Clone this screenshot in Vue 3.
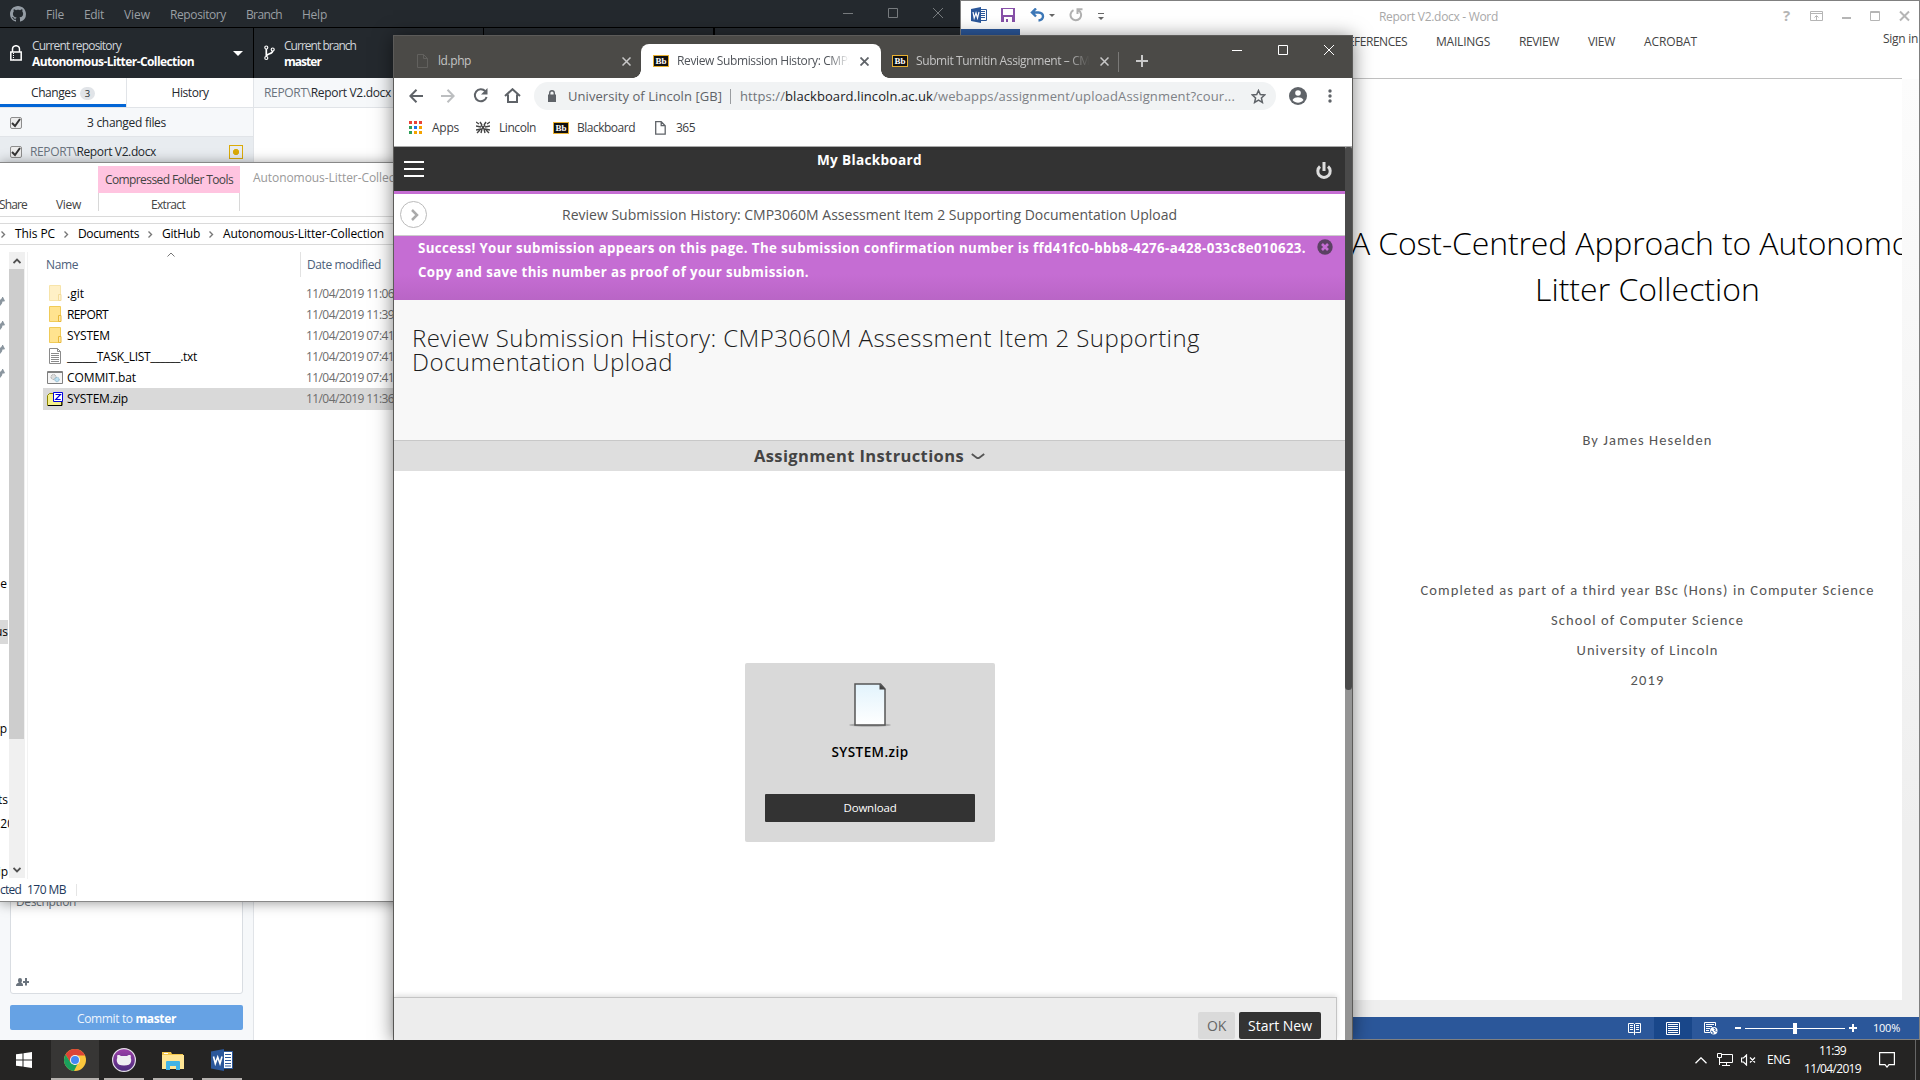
<script setup>
// Sets an element's width and spreads its letters to fill it.
const vFit = {
  mounted(el, { value }) {
    const range = document.createRange()
    range.selectNodeContents(el)
    const natural = range.getBoundingClientRect().width
    el.style.width = value + 'px'
    el.style.letterSpacing = (value - natural) / el.textContent.length + 'px'
  },
}

const menu = [['File', 18], ['Edit', 20], ['View', 26], ['Repository', 56], ['Branch', 36], ['Help', 25]]
const files = [
  { name: '.git', w: 17, time: '11:06', kind: 'folder pale' },
  { name: 'REPORT', w: 41, time: '11:39', kind: 'folder' },
  { name: 'SYSTEM', w: 43, time: '07:41', kind: 'folder' },
  { name: '______TASK_LIST______.txt', w: 130, time: '07:41', kind: 'txt' },
  { name: 'COMMIT.bat', w: 69, time: '07:41', kind: 'bat' },
  { name: 'SYSTEM.zip', w: 61, time: '11:36', kind: 'zip' },
]
const crumbs = [['This PC', 40], ['Documents', 61], ['GitHub', 38], ['Autonomous-Litter-Collection', 161]]
const ribbon = [['MAILINGS', 54], ['REVIEW', 40], ['VIEW', 27], ['ACROBAT', 53]]
const appColors = ['#ea4335', '#ea4335', '#ea4335', '#2ea05a', '#1a73e8', '#f5a300', '#2ea05a', '#f5a300', '#f5a300']
const octocat = 'M8 0C3.58 0 0 3.58 0 8c0 3.54 2.29 6.53 5.47 7.59.4.07.55-.17.55-.38 0-.19-.01-.82-.01-1.49-2.01.37-2.53-.49-2.69-.94-.09-.23-.48-.94-.82-1.13-.28-.15-.68-.52-.01-.53.63-.01 1.08.58 1.23.82.72 1.21 1.87.87 2.33.66.07-.52.28-.87.51-1.07-1.78-.2-3.64-.89-3.64-3.95 0-.87.31-1.59.82-2.15-.08-.2-.36-1.02.08-2.12 0 0 .67-.21 2.2.82.64-.18 1.32-.27 2-.27s1.36.09 2 .27c1.53-1.04 2.2-.82 2.2-.82.44 1.1.16 1.92.08 2.12.51.56.82 1.27.82 2.15 0 3.07-1.87 3.75-3.65 3.95.29.25.54.73.54 1.48 0 1.07-.01 1.93-.01 2.2 0 .21.15.46.55.38A8.01 8.01 0 0 0 16 8c0-4.42-3.58-8-8-8z'
</script>

<template>
  <div class="desktop">
    <!-- GitHub Desktop -->
    <section class="win github">
      <div class="gh-title">
        <svg class="octo" viewBox="0 0 16 16" width="16" height="16"><path fill="#959da5" :d="octocat" /></svg>
        <nav class="gh-menu"><span v-for="m in menu" :key="m[0]" v-fit="m[1]">{{ m[0] }}</span></nav>
        <svg class="gh-ctl" width="100" height="12" fill="none" stroke="#777b7e"><path d="M0 6.500h10M45.500 1.500h9v9h-9zM90 1l10 10M100 1l-10 10" /></svg>
      </div>
      <div class="gh-bar">
        <div class="gh-repo">
          <svg width="12" height="16" viewBox="0 0 12 16" fill="none" stroke="#fff" stroke-width="1.500"><path d="M2.500 7V4a3.500 3.300 0 0 1 7 0v3M.8 7h10.400v8H.8z" /><path stroke-width="1" d="M3.500 8v7" stroke-dasharray="1 1" /></svg>
          <div class="two"><span v-fit="89">Current repository</span><b v-fit="162">Autonomous-Litter-Collection</b></div>
          <i class="down"></i>
        </div>
        <div class="gh-branch">
          <svg width="11" height="16" viewBox="0 0 11 16" fill="none" stroke="#fff" stroke-width="1.200"><circle cx="2.300" cy="2.500" r="1.500" /><circle cx="2.300" cy="13" r="1.500" /><circle cx="8.700" cy="4.500" r="1.500" /><path stroke-width="1.700" d="M2.300 4v7.500M8.700 6c0 3.500-6.400 2-6.400 5.500" /></svg>
          <div class="two"><span v-fit="72">Current branch</span><b v-fit="37">master</b></div>
        </div>
        <div class="gh-push"></div>
        <div class="gh-rest"></div>
      </div>
      <div class="gh-main">
        <aside class="gh-side">
          <div class="gh-tabs">
            <div class="tab on"><span v-fit="45">Changes</span><em>3</em></div>
            <div class="tab"><span v-fit="37">History</span></div>
          </div>
          <div class="gh-row head"><i class="check"><svg width="12" height="12"><path d="M2 6l3 3 5-7" /></svg></i><span class="changed" v-fit="79">3 changed files</span></div>
          <div class="gh-row sel"><i class="check"><svg width="12" height="12"><path d="M2 6l3 3 5-7" /></svg></i><span class="path" v-fit="126"><u>REPORT\</u>Report V2.docx</span><i class="mod"></i></div>
          <div class="gh-space"></div>
          <div class="desc"><span v-fit="60">Description</span>
            <svg width="13" height="9" fill="#6a737d"><path d="M2 2a2 2 0 0 1 4 0c0 1.500-.4 2-.8 2.500C7 5.500 7 6 7 8H0C0 6 .5 5.500 2.800 4.500 2.300 4 2 3.500 2 2zM9 0h2v3h2v2h-2v2.500H9V5H7V3h2z" /></svg>
          </div>
          <div class="commit"><span v-fit="99">Commit to <b>master</b></span></div>
        </aside>
        <div class="gh-diff"><div class="gh-file"><span v-fit="127"><u>REPORT\</u>Report V2.docx</span></div></div>
      </div>
    </section>

    <!-- Word -->
    <section class="win word">
      <div class="w-title">
        <svg class="w-logo" width="16" height="16"><path fill="#fff" stroke="#2b579a" d="M8.500 2.500h7v11h-7z" /><path stroke="#2b579a" d="M10 4.500h4M10 6.500h4M10 8.500h4M10 10.500h4" /><path fill="#2b579a" d="M0 2l10-2v16L0 14z" /><path fill="none" stroke="#fff" stroke-width="1.200" d="M2 5l1.200 6L5 6l1.500 5L8 5" /></svg>
        <svg class="save" width="14" height="14"><path fill="#8750a8" d="M0 0h14v14H0z" /><path fill="#fff" d="M2 1h10v6H2zM3 9h8v5H7v-3H5v3H3z" /></svg>
        <svg class="undo" width="15" height="14" fill="none" stroke="#3d78b8" stroke-width="2.400"><path d="M2 4.500h6.500c6 0 6 7.500 0 8M6 .5L2 4.500l4 4" /></svg>
        <i class="tri"></i>
        <svg class="redo" width="14" height="14" fill="none" stroke="#b1b1b1" stroke-width="2"><path d="M4.500 2.200a5.300 5.300 0 1 0 5 .2M8.500 6V1.200h5" /></svg>
        <div class="more"><i class="tri"></i></div>
        <span class="w-name" v-fit="119">Report V2.docx - Word</span>
        <b class="w-help">?</b>
        <svg class="w-ctl" width="100" height="12" fill="none" stroke="#b5b5b5"><path d="M.5 1.500h12v9H.5zM.5 3.500h12M6.500 10V6M4.500 7.500l2-2 2 2" /><path stroke-width="2" d="M32 8h9" /><path d="M60.500 1.500h9v9h-9zM60.500 2.500h9" /><path stroke-width="2" d="M90 1.500l9 9M99 1.500l-9 9" /></svg>
      </div>
      <div class="w-ribbon">
        <i class="w-file"></i>
        <span class="w-ref" v-fit="66">REFERENCES</span>
        <span v-for="r in ribbon" :key="r[0]" v-fit="r[1]">{{ r[0] }}</span>
        <span class="w-sign" v-fit="35">Sign in</span>
      </div>
      <div class="w-body">
        <article class="page">
          <h1><span v-fit="593">A Cost-Centred Approach to Autonomous</span></h1>
          <h1><span v-fit="225">Litter Collection</span></h1>
          <p class="by"><span v-fit="130">By James Heselden</span></p>
          <p><span v-fit="454">Completed as part of a third year BSc (Hons) in Computer Science</span></p>
          <p><span v-fit="193">School of Computer Science</span></p>
          <p><span v-fit="142">University of Lincoln</span></p>
          <p><span v-fit="34">2019</span></p>
        </article>
      </div>
      <div class="w-status">
        <svg class="book" width="13" height="13" fill="none" stroke="#fff"><path d="M.5 1.500h5l1 1 1-1h5v9h-5l-1 1-1-1h-5zM6.500 2v11M2 3.500h3M2 5.500h3M2 7.500h3M8 3.500h3M8 5.500h3M8 7.500h3" /></svg>
        <div class="print"><svg width="14" height="13" fill="none" stroke="#fff"><path d="M.5.5h13v12H.5zM2 2.500h10M2 4.500h10M2 6.500h10M2 8.500h10M2 10.500h10" /></svg></div>
        <svg class="web" width="14" height="13" fill="none" stroke="#fff"><path d="M6 10.500H.5V.5h11V4M2 2.500h8M2 4.500h6M2 6.500h4M2 8.500h3" /><circle cx="9.800" cy="8.800" r="3.700" fill="#fff" stroke="none" /><path stroke="#2b579a" d="M7 9l2 1v2M9.500 6l2 1-1 1.500 2 1" /></svg>
        <i class="minus"></i><div class="slider"><i></i></div>
        <svg class="plus" width="8" height="8" stroke="#fff" stroke-width="2"><path d="M0 4h8M4 0v8" /></svg>
        <span v-fit="27">100%</span>
      </div>
    </section>

    <!-- File Explorer -->
    <section class="win explorer">
      <div class="e-top">
        <div class="e-left"><span class="share" v-fit="28">Share</span><span v-fit="25">View</span></div>
        <div class="e-tools"><div class="pink"><span v-fit="128">Compressed Folder Tools</span></div><div class="extract"><span v-fit="34">Extract</span></div></div>
        <span class="e-name" v-fit="163">Autonomous-Litter-Collection</span>
      </div>
      <div class="e-crumbs">
        <template v-for="c in crumbs" :key="c[0]"><svg width="5" height="7" fill="none" stroke="#777" stroke-width="1.400"><path d="M.5.5l3 3-3 3" /></svg><span v-fit="c[1]">{{ c[0] }}</span></template>
      </div>
      <div class="e-main">
        <div class="nav">
          <svg v-for="n in 4" :key="n" width="5" height="9" fill="#8b969f"><path d="M0 3l2-2V0h1l2 4-1 .5-1.500 0-.5 2L0 9z" /></svg>
          <span class="n1">e</span><span class="n2">us</span><span class="n3">p</span><span class="n4">ts</span><span class="n5">20</span><span class="n6">ip</span>
        </div>
        <div class="scroll">
          <div class="btn"><svg width="8" height="6" fill="none" stroke="#505050" stroke-width="1.800"><path d="M.5 5L4 1.500 7.500 5" /></svg></div>
          <div class="thumb"></div>
          <div class="btn low"><svg width="8" height="6" fill="none" stroke="#505050" stroke-width="1.800"><path d="M.5 1L4 4.500 7.500 1" /></svg></div>
        </div>
        <div class="list">
          <div class="l-head"><span v-fit="32">Name</span><svg width="8" height="5" fill="none" stroke="#777"><path d="M.5 4.500L4 1l3.500 3.500" /></svg><i></i><span v-fit="74">Date modified</span></div>
          <div v-for="f in files" :key="f.name" class="l-row" :class="{ picked: f.kind === 'zip' }">
            <div class="ico">
              <svg v-if="f.kind.startsWith('folder')" :class="f.kind" width="14" height="17"><path fill="#ffe38f" stroke="#f0cb58" d="M1.500.5h11v15h-11z" /><path fill="#ffe9a6" stroke="#e8b83a" d="M10.500 9.500h2.500v6h-2.500z" /></svg>
              <svg v-else-if="f.kind === 'txt'" width="14" height="17" fill="#fff" stroke="#8a8a8a"><path d="M1.500.5h8l3 3v12h-11zM9.500.5v3h3M3 5.500h8M3 7.500h8M3 9.500h8M3 11.500h8M3 13.500h8" /></svg>
              <svg v-else-if="f.kind === 'bat'" class="wide" width="16" height="14"><path fill="#f6f6f6" stroke="#808080" d="M.5.5h15v12H.5zM.5 1.500h15" /><circle cx="6.500" cy="6" r="2.500" fill="#ddd" stroke="#999" stroke-dasharray="1 .7" /><circle cx="10" cy="8.500" r="2.200" fill="#bcdff0" stroke="#7cacc4" stroke-dasharray="1 .7" /></svg>
              <svg v-else class="wide" width="16" height="15"><path fill="#f5f08a" stroke="#8b8200" d="M.5 3.500l2-2h4v1h8v11H.5z" /><path stroke="#000" d="M1 13.500h14V9" fill="none" /><path fill="#fff" stroke="#00d" d="M6.500.5h9v9h-9z" /><path fill="none" stroke="#00d" stroke-width="1.100" d="M8.500 2.500h5L8.700 7.500h5" /></svg>
            </div>
            <span class="fname" v-fit="f.w">{{ f.name }}</span>
            <span class="date" v-fit="88">11/04/2019 {{ f.time }}</span>
          </div>
        </div>
      </div>
      <div class="e-status"><span v-fit="21">cted</span><span v-fit="39">170 MB</span><i></i></div>
    </section>

    <!-- Chrome -->
    <section class="win chrome">
      <div class="c-tabs">
        <div class="c-tab first">
          <svg width="11" height="14" fill="none" stroke="#62615e"><path d="M.5.5h6l4 4v9H.5zM6.500.5v4h4" /></svg>
          <span class="ct"><span v-fit="33">ld.php</span></span>
          <svg class="x" width="9" height="9" stroke="#c8c8c8" stroke-width="1.500"><path d="M.5.5l8 8M8.500.5l-8 8" /></svg>
        </div>
        <div class="c-tab active">
          <i class="bb">Bb</i><span class="ct"><span v-fit="207">Review Submission History: CMP3060M</span></span>
          <svg class="x" width="9" height="9" stroke="#5f6368" stroke-width="1.800"><path d="M.5.5l8 8M8.500.5l-8 8" /></svg>
        </div>
        <div class="c-tab last">
          <i class="bb">Bb</i><span class="ct"><span v-fit="200">Submit Turnitin Assignment – CMP306</span></span>
          <svg class="x" width="9" height="9" stroke="#c8c8c8" stroke-width="1.500"><path d="M.5.5l8 8M8.500.5l-8 8" /></svg>
        </div>
        <svg class="new" width="12" height="12" stroke="#c9c9c9" stroke-width="2"><path d="M0 6h12M6 0v12" /></svg>
        <svg class="c-ctl" width="104" height="12" fill="none" stroke="#fff"><path d="M0 6.500h10M46.500 1.500h9v9h-9zM92 1l10 10M102 1l-10 10" /></svg>
      </div>
      <div class="c-bar">
        <svg width="14" height="14" fill="none" stroke="#5f6368" stroke-width="2"><path d="M14 7H1.500M7.500.8L1.300 7l6.200 6.200" /></svg>
        <svg width="14" height="14" fill="none" stroke="#bcbec0" stroke-width="2"><path d="M0 7h12.500M6.500.8L12.700 7l-6.200 6.200" /></svg>
        <svg class="reload" width="15" height="15" fill="none" stroke="#5f6368" stroke-width="2"><path d="M12.300 3.200a6 6 0 1 0 1.300 5.800" /><path fill="#5f6368" stroke="none" d="M14.500 0v6.500H8z" /></svg>
        <svg class="home" width="17" height="15" fill="none" stroke="#5f6368" stroke-width="2"><path d="M1 8l7.500-6.800L16 8M4 6.500V14h9V6.500" /></svg>
        <div class="omni">
          <svg width="8" height="12" fill="#5f6368"><path d="M0 4.500h8V12H0z" /><path fill="none" stroke="#5f6368" stroke-width="1.400" d="M1.700 5V3a2.300 2.300 0 0 1 4.600 0v2" /></svg>
          <span class="org" v-fit="154">University of Lincoln [GB]</span><i></i>
          <span v-fit="45">https://</span><span class="host" v-fit="148">blackboard.lincoln.ac.uk</span><span class="rest" v-fit="302">/webapps/assignment/uploadAssignment?cour...</span>
          <svg class="star" width="15" height="15" fill="none" stroke="#5f6368" stroke-width="1.500"><path d="M7.500 1.500l1.800 4.100 4.400.4-3.300 3 1 4.400-3.900-2.300-3.900 2.300 1-4.400-3.300-3 4.400-.4z" /></svg>
        </div>
        <svg class="me" width="18" height="18"><circle cx="9" cy="9" r="9" fill="#5f6368" /><circle cx="9" cy="6" r="2.800" fill="#fff" /><path fill="#fff" d="M3.500 13c1-2 3.500-2.700 5.500-2.700s4.500.7 5.500 2.700c-3 3.500-8 3.500-11 0z" /></svg>
        <svg class="dots" width="4" height="14" fill="#5f6368"><circle cx="2" cy="2" r="1.700" /><circle cx="2" cy="7" r="1.700" /><circle cx="2" cy="12" r="1.700" /></svg>
      </div>
      <div class="c-marks">
        <div class="apps"><i v-for="(c, i) in appColors" :key="i" :style="{ background: c }"></i></div><span v-fit="27">Apps</span>
        <svg class="lin" width="14" height="13" stroke="#444" stroke-width="1.400" fill="none"><path d="M0 1l3 2M14 1l-3 2M4 1l2 3M10 1L8 4M0 5l5 1M14 5l-5 1M0 9l5-1M14 9L9 8M1 12l3-3M13 12l-3-3M5 12l1-4M9 12L8 8M5 4l4 5M9 4L5 9" /></svg><span v-fit="37">Lincoln</span>
        <i class="bb">Bb</i><span v-fit="58">Blackboard</span>
        <svg class="pg" width="11" height="14" fill="none" stroke="#5f6368" stroke-width="1.300"><path d="M.7.7h5.500l4 4v8.500H.7zM6.200.7v4h4" /></svg><span v-fit="19">365</span>
      </div>
      <div class="view">
        <div class="content">
          <header class="b-head">
            <div class="burger"><i></i><i></i><i></i></div>
            <b v-fit="105">My Blackboard</b>
            <svg class="power" width="18" height="18" fill="none" stroke="#ddd" stroke-width="3"><path d="M5 4.500a6.200 6.200 0 1 0 8 0M9 0v9" /></svg>
          </header>
          <div class="b-crumb">
            <i class="circle"><svg width="8" height="12" fill="none" stroke="#aaa" stroke-width="2.500"><path d="M1 1l5 5-5 5" /></svg></i>
            <span v-fit="615">Review Submission History: CMP3060M Assessment Item 2 Supporting Documentation Upload</span>
          </div>
          <div class="success">
            <div><b v-fit="888">Success! Your submission appears on this page. The submission confirmation number is ffd41fc0-bbb8-4276-a428-033c8e010623.</b><b v-fit="391">Copy and save this number as proof of your submission.</b></div>
            <svg width="16" height="16"><circle cx="8" cy="8" r="7.700" fill="#5b4163" /><path stroke="#c56dd3" stroke-width="2.600" d="M5 5l6 6M11 5l-6 6" /></svg>
          </div>
          <div class="b-title"><span v-fit="788">Review Submission History: CMP3060M Assessment Item 2 Supporting</span><span v-fit="261">Documentation Upload</span></div>
          <div class="instr"><b v-fit="210">Assignment Instructions</b><svg width="14" height="7" fill="none" stroke="#555" stroke-width="1.900"><path d="M.8 1L6 4.900q1 .5 2 0L13.200 1" /></svg></div>
          <div class="stage">
            <div class="card">
              <svg width="44" height="46"><defs><linearGradient id="sheet" x2="0" y2="1"><stop stop-color="#e2f3fc" /><stop offset="1" stop-color="#fff" /></linearGradient></defs><ellipse cx="22" cy="43" rx="21" ry="1.800" fill="#aaa" /><path fill="url(#sheet)" stroke="#555" stroke-width="1.500" d="M7 2h25.500L37 7v36H7z" /><path fill="#444" d="M31.500 2l6 5.500h-6z" /></svg>
              <b v-fit="77">SYSTEM.zip</b>
              <div class="dl"><span v-fit="53">Download</span></div>
            </div>
          </div>
          <footer><div class="ok"><span v-fit="19">OK</span></div><div class="start"><span v-fit="64">Start New</span></div></footer>
        </div>
        <div class="c-scroll"><i></i></div>
      </div>
    </section>

    <!-- Taskbar -->
    <section class="win task">
      <div class="k win-k"><svg width="16" height="16" fill="#fff"><path d="M0 2.300l6.500-.9v6.100H0zM7.500 1.200L16 0v7.500H7.500zM0 8.500h6.500v6.100L0 13.700zM7.500 8.500H16V16l-8.500-1.200z" /></svg></div>
      <div class="k hot"><svg width="22" height="22" viewBox="0 0 22 22"><circle cx="11" cy="11" r="11" fill="#fbc63c" /><path fill="#dc4437" d="M1.500 5.500a11 11 0 0 1 19 0L20.900 6.500H11L6 13z" /><path fill="#1a9f5c" d="M1.500 5.500L6.500 13.500 11 16l2.500-1L10 22A11 11 0 0 1 1.500 5.500z" /><circle cx="11" cy="11" r="5" fill="#f4f4f4" /><circle cx="11" cy="11" r="4" fill="#4587f3" /></svg></div>
      <div class="k"><svg width="24" height="24"><defs><linearGradient id="plum" x2="0" y2="1"><stop stop-color="#9c3fa8" /><stop offset="1" stop-color="#4a2c7c" /></linearGradient></defs><circle cx="12" cy="12" r="11.400" fill="url(#plum)" stroke="#e4dfe8" stroke-width="1.200" /><path fill="#efeff2" d="M5.500 7c1.500-.3 3 .5 3.500 1h6c.5-.5 2-1.300 3.500-1 .5 1 .4 2 .2 3 .6 1 .6 2 .4 3.500-.7 3-3 4-7.100 4s-6.400-1-7.100-4c-.2-1.500-.2-2.500.4-3.500-.2-1-.3-2 .2-3z" /></svg></div>
      <div class="k"><svg width="22" height="19"><path fill="#f3c64a" d="M0 1h9l1 2h11v3H0z" /><path fill="#ffe594" d="M0 4h22v14H0z" /><path fill="#41b4e6" d="M4 19v-8q0-1 1-1h12q1 0 1 1v8h-4v-4H8v4z" /><path stroke="#fff" d="M2 2.500h4" /></svg></div>
      <div class="k"><svg width="22" height="22"><path fill="#fff" stroke="#2b579a" d="M12 2.500h9.500v17H12z" /><path stroke="#2b579a" stroke-width="1.200" d="M14 5.500h6M14 8.500h6M14 11.500h6M14 14.500h6M14 17h6" /><path fill="#2b579a" d="M0 2.500L13 0v22L0 19.500z" /><path fill="none" stroke="#fff" stroke-width="1.600" d="M2.500 7.500L4.300 14.500 6.700 8 9 14.500 11 7.500" /></svg></div>
      <div class="tray">
        <svg class="up" width="12" height="7" fill="none" stroke="#fff" stroke-width="1.300"><path d="M.5 6.300L6 .8l5.500 5.500" /></svg>
        <svg class="net" width="16" height="14" fill="none" stroke="#fff"><path d="M5 1.500h10.500v8H3M2.500 5v7M.5.500h4v4h-4zM9.500 10v3M5 12.500h8" /></svg>
        <svg class="snd" width="15" height="12" fill="none" stroke="#fff" stroke-width="1.200"><path d="M.5 4h2l3-3v10l-3-3h-2zM9 3.500l5 5M14 3.500l-5 5" /></svg>
        <span class="eng" v-fit="23">ENG</span>
        <div class="clock"><span v-fit="27">11:39</span><span v-fit="57">11/04/2019</span></div>
        <svg class="note" width="16" height="16" fill="none" stroke="#fff" stroke-width="1.200"><path d="M.6.6h14.800v12H10l-2 2.500-2-2.500H.6z" /></svg>
        <i class="peek"></i>
      </div>
    </section>
  </div>
</template>

<style>
body { margin: 0; overflow: hidden; }
</style>

<style scoped>
.desktop { position: relative; width: 1920px; height: 1080px; overflow: hidden; background: #fff; font: 12px/16px "Open Sans", "Noto Sans", sans-serif; color: #24292e; }
.desktop * { box-sizing: border-box; }
.win { position: absolute; overflow: hidden; display: flex; flex-direction: column; }
.win span, .win b { white-space: nowrap; flex: none; display: block; }
.win b b { display: inline; }
svg { flex: none; display: block; }
u { text-decoration: none; color: #6a737d; }
i, em { font-style: normal; display: block; flex: none; }

.github { left: 0; top: 0; width: 960px; height: 1040px; background: #fff; }
.gh-title { height: 28px; background: #24292e; border-bottom: 1px solid #000; display: flex; align-items: center; padding: 1px 6px 0 10px; color: #9a9fa4; flex: none; }
.gh-menu { display: flex; gap: 20px; margin: 1px auto 0 20px; }
.gh-ctl { margin: -3px 11px 0 0; }
.gh-bar { height: 50px; background: #24292e; display: flex; flex: none; color: #d1d5da; }
.gh-bar > div { border-right: 1px solid #000; display: flex; align-items: center; }
.gh-repo { width: 254px; padding-left: 10px; }
.gh-branch { width: 230px; padding-left: 10px; }
.gh-push { width: 230px; }
.two { margin-left: 10px; width: 201px; margin-top: 2px; }
.gh-branch .two { margin-left: 9px; }
.two b { color: #fff; }
.down { border: 5px solid transparent; border-top-color: #fff; border-bottom: 0; }
.gh-main { display: flex; flex: 1; }
.gh-side { width: 254px; border-right: 1px solid #e1e4e8; background: #f6f8fa; display: flex; flex-direction: column; }
.gh-tabs { display: flex; height: 30px; background: #fff; border-bottom: 1px solid #e1e4e8; flex: none; }
.tab { flex: 1; display: flex; align-items: center; justify-content: center; padding-top: 1px; }
.tab.on { border-right: 1px solid #e1e4e8; box-shadow: inset 0 -3px #0366d6; gap: 4px; }
.tab em { font-size: 9.500px; line-height: 13px; width: 15px; height: 13px; text-align: center; background: #e1e4e8; border-radius: 7px; }
.gh-row { height: 29px; border-bottom: 1px solid #e1e4e8; display: flex; align-items: center; padding: 1px 10px 0; flex: none; }
.gh-row.sel { background: #e8ecf0; height: 30px; }
.check { width: 12px; height: 12px; border: 1px solid #8d8d8d; border-radius: 2px; background: #ececec; }
.check svg { margin: -1px; fill: none; stroke: #333; stroke-width: 2; }
.changed { margin-left: 65px; }
.path { margin-left: 8px; }
.mod { width: 14px; height: 14px; margin-left: 73px; border: 1px solid #dbab09; background: radial-gradient(circle, #dbab09 2.800px, transparent 3.300px); }
.gh-space { flex: 1; }
.desc { height: 110px; margin: 0 10px; border: 1px solid #d9dde2; border-radius: 3px; background: #fff; padding: 9px 5px 6px; color: #6a737d; display: flex; flex-direction: column; justify-content: space-between; }
.commit { height: 25px; margin: 11px 10px 10px; background: #66a2e4; border-radius: 2px; color: #eef5fd; display: flex; align-items: center; justify-content: center; flex: none; padding-top: 2px; }
.commit b { display: inline; color: #fff; }
.gh-diff { flex: 1; }
.gh-file { height: 30px; background: #f6f8fa; border-bottom: 1px solid #e1e4e8; display: flex; align-items: center; padding: 1px 0 0 10px; }

.word { left: 960px; top: 0; width: 960px; height: 1040px; background: #fff; border: 1px solid #808080; color: #444; }
.w-title { height: 28px; display: flex; align-items: center; flex: none; padding-left: 10px; }
.save { margin-left: 14px; }
.undo { margin-left: 15px; }
.tri { border: 3px solid transparent; border-top-color: #666; border-bottom: 0; margin-left: 4px; }
.redo { margin-left: 14px; }
.more { margin-left: 15px; border-top: 1px solid #666; padding-top: 3px; width: 6px; margin-top: 3px; }
.more .tri { margin: 0; }
.w-name { margin-left: 275px; color: #a8a8a8; margin-top: 3px; }
.w-help { margin-left: 285px; width: 10px; font-size: 15px; color: #b5b5b5; }
.w-ctl { margin-left: 17px; margin-top: 1px; }
.w-ribbon { height: 50px; flex: none; display: flex; padding-top: 5px; border-bottom: 1px solid #c0c0c0; width: 941px; font-size: 12px; }
.w-file { width: 59px; height: 10px; background: #2b579a; margin: -5px 0 0; }
.w-ribbon span { margin-left: 29px; }
.w-ribbon .w-ref { margin-left: 321px; }
.w-ribbon .w-sign { margin: -3px 0 0 186px; }
.w-body { flex: 1; background: linear-gradient(#fcfcfc, #efefef 80%); padding-bottom: 17px; display: flex; }
.page { width: 941px; background: #fff; padding: 141px 0 0 432px; overflow: hidden; display: flex; flex-direction: column; align-items: center; }
.page h1, .page p { margin: 0; display: flex; justify-content: center; width: 516px; flex: none; }
.page h1 { font-size: 32px; font-weight: 300; line-height: 46px; color: #000; }
.page p { font-family: Carlito, Lato, sans-serif; font-size: 14.500px; line-height: 30px; color: #555; }
.page .by { margin: 113px 0 120px; }
.w-status { height: 22px; flex: none; background: #2b579a; display: flex; align-items: center; color: #fff; font-size: 11px; }
.book { margin-left: 667px; }
.print { width: 38px; height: 22px; background: #19478a; margin-left: 13px; display: flex; align-items: center; justify-content: center; }
.web { margin-left: 12px; }
.minus { width: 6px; height: 2px; background: #fff; margin-left: 17px; }
.slider { width: 100px; height: 11px; margin: 0 4px; background: linear-gradient(#fff, #fff) 0 5px / 100% 1px no-repeat; display: flex; justify-content: center; }
.slider i { width: 4px; background: #fff; }
.w-status span { margin-left: 16px; }

.explorer { left: 0; top: 162px; width: 700px; height: 740px; background: #fff; border-top: 1px solid #888; border-bottom: 1px solid #888; box-shadow: 0 1px 12px rgba(0,0,0,.4); color: #000; }
.e-top { height: 54px; border-bottom: 1px solid #dadada; display: flex; flex: none; color: #444; }
.e-left { display: flex; padding-top: 34px; width: 98px; }
.e-left .share { margin: 0 29px 0 -1px; }
.e-tools { width: 142px; padding-top: 3px; }
.pink { height: 27px; background: #ffc4e0; display: flex; justify-content: center; align-items: center; padding-top: 1px; }
.extract { height: 18px; border: 1px solid #d8d8d8; border-width: 0 1px; display: flex; justify-content: center; padding: 4px 2px 0 0; }
.e-name { color: #999; margin: 7px 0 0 13px; }
.e-crumbs { margin-top: 6px; height: 22px; border: 1px solid #dadada; border-width: 1px 0; display: flex; align-items: center; flex: none; }
.e-crumbs svg { margin: 1px 9px 0 9px; }
.e-crumbs svg:first-child { margin-left: 1px; }
.e-main { flex: 1; display: flex; padding-top: 7px; }
.nav { width: 9px; overflow: hidden; position: relative; padding-top: 45px; }
.nav svg { margin-bottom: 15px; }
.nav span { position: absolute; right: 1px; line-height: 24px; }
.nav .n1 { top: 320px; right: 2px; } .nav .n2 { top: 368px; background: #d9d9d9; } .nav .n3 { top: 465px; right: 2px; } .nav .n4 { top: 536px; } .nav .n5 { top: 560px; right: -5px; } .nav .n6 { top: 608px; }
.scroll { width: 16px; background: #f0f0f0; height: 626px; display: flex; flex-direction: column; }
.scroll .btn { height: 17px; display: flex; align-items: center; justify-content: center; }
.scroll .low { margin-top: auto; }
.thumb { height: 470px; width: 15px; background: #cdcdcd; }
.list { flex: 1; margin-left: 2px; border-left: 1px solid #f2f2f2; }
.l-head { display: flex; padding-left: 18px; height: 31px; color: #4c607a; }
.l-head span { margin-top: 5px; }
.l-head svg { margin: 0 125px 0 89px; }
.l-head i { width: 1px; height: 25px; background: #e2e2e2; }
.l-head i + span { margin-left: 6px; }
.l-row { height: 21px; display: flex; align-items: center; margin-left: 15px; padding-left: 5px; }
.l-row.picked { background: #d9d9d9; height: 22px; }
.ico { width: 19px; display: flex; }
.ico .wide { margin-left: -1px; }
.ico .pale { opacity: .5; }
.date { position: absolute; left: 306px; color: #6d6d6d; }
.e-status { height: 22px; display: flex; align-items: center; color: #1e395b; flex: none; gap: 6px; }
.e-status i { width: 1px; height: 12px; background: #e5e5e5; margin-left: 4px; }

.chrome { left: 393px; top: 35px; width: 960px; height: 1005px; background: #fff; border: 1px solid #5c5b59; border-bottom: 0; box-shadow: 0 2px 18px rgba(0,0,0,.5); overflow: visible; color: #5f6368; }
.c-tabs { height: 42px; flex: none; background: #4b4a47; display: flex; color: #c4c4c4; }
.c-tab { display: flex; align-items: center; height: 34px; margin-top: 8px; }
.win .ct { flex: 1; overflow: hidden; }
.first { width: 247px; padding: 0 10px 0 23px; }
.first .ct { margin-left: 10px; }
.active { width: 240px; background: #fff; border-radius: 8px 8px 0 0; color: #50545a; padding: 0 12px; position: relative; }
.active::before, .active::after { content: ""; position: absolute; bottom: 0; width: 8px; height: 8px; }
.active::before { left: -8px; background: radial-gradient(circle at 0 0, transparent 7.500px, #fff 8px); }
.active::after { right: -8px; background: radial-gradient(circle at 100% 0, transparent 7.500px, #fff 8px); }
.bb { width: 16px; height: 12px; border: 1px solid #e8b030; background: #111; color: #fff; font: bold 9px/10px "Liberation Serif", serif; text-align: center; }
.active .ct, .last .ct { margin: 0 7px 0 8px; mask-image: linear-gradient(90deg, #000 86%, transparent 98%); }
.last { width: 238px; padding: 0 10px 0 11px; background: linear-gradient(#7a7977, #7a7977) 100% 8px / 1px 20px no-repeat; }
.new { margin: 19px 0 0 17px; }
.c-ctl { margin: 8px 16px 0 auto; }
.c-bar { height: 35px; flex: none; display: flex; align-items: center; padding: 0 0 0 15px; }
.c-bar > svg + svg { margin-left: 18px; }
.c-bar .home { margin-left: 16px; }
.omni { width: 742px; height: 28px; background: #f1f3f4; border-radius: 14px; margin-left: 13px; display: flex; align-items: center; padding-left: 14px; font-size: 13px; color: #70757a; margin-top: 1px; }
.omni .org { margin-left: 12px; color: #5f6368; }
.omni i { width: 1px; height: 15px; background: #9a9da0; margin: 0 9px 0 8px; }
.omni .host { color: #202124; }
.omni .rest { color: #7d8186; }
.star { margin-left: 16px; }
.c-bar .me { margin-left: 13px; }
.c-bar .dots { margin-left: 21px; }
.c-marks { height: 34px; flex: none; border-bottom: 1px solid #a9a9a9; display: flex; align-items: center; padding: 0 0 4px 15px; color: #3c4043; }
.apps { display: grid; grid-template-columns: repeat(3, 3px); grid-auto-rows: 3px; gap: 2px; margin-right: 10px; }
.lin { margin: 0 9px 0 17px; }
.c-marks .bb { margin: 0 8px 0 17px; }
.pg { margin: 0 10px 0 20px; }
.view { flex: 1; display: flex; min-height: 0; }
.content { width: 951px; display: flex; flex-direction: column; color: #333; }
.b-head { height: 47px; background: #333; border-bottom: 3px solid #c56dd3; display: flex; color: #fff; font-size: 13.600px; flex: none; }
.burger { margin: 14px 393px 0 10px; width: 20px; display: grid; gap: 5px; height: 16px; }
.burger i { height: 2px; background: #fff; }
.b-head b { margin-top: 5px; }
.power { margin: 15px 12px 0 auto; }
.b-crumb { height: 42px; border-bottom: 1px solid #ccc; display: flex; align-items: center; font-size: 14px; color: #555; flex: none; }
.circle { width: 27px; height: 27px; border: 1px solid #bbb; border-radius: 50%; margin: 0 135px 0 6px; display: flex; align-items: center; justify-content: center; padding-left: 2px; }
.success { height: 64px; background: linear-gradient(#c56dd3 60%, #b965c6); color: #fff; font-size: 13.300px; line-height: 24px; display: flex; padding-left: 24px; flex: none; }
.success svg { margin: 3px 0 0 11px; }
.b-title { height: 141px; background: #f8f8f8; border-bottom: 1px solid #c8c8c8; padding: 26px 0 0 18px; font-size: 24px; font-weight: 300; line-height: 24px; color: #1c1c1c; flex: none; }
.instr { height: 30px; background: #dedede; display: flex; align-items: center; justify-content: center; gap: 7px; font-size: 16.500px; color: #444; flex: none; }
.stage { flex: 1; background: #fff; padding-top: 192px; }
.card { width: 250px; height: 179px; margin-left: 351px; background: #d9d9d9; border-radius: 2px; display: flex; flex-direction: column; align-items: center; padding-top: 19px; }
.card b { margin-top: 16px; font-size: 13.500px; font-weight: 600; color: #000; }
.dl { width: 210px; height: 28px; margin-top: 34px; background: #333; color: #fff; font-size: 11.500px; display: flex; align-items: center; justify-content: center; border-radius: 1px; }
footer { height: 43px; width: 943px; background: #ededed; border: 1px solid #c4c4c4; border-width: 1px 1px 0 0; box-shadow: 0 -2px 5px rgba(0,0,0,.12); display: flex; justify-content: flex-end; padding: 14px 15px 0 0; gap: 4px; font-size: 14px; flex: none; }
footer div { height: 27px; display: flex; align-items: center; justify-content: center; border-radius: 2px; }
.ok { width: 37px; background: #dadada; color: #666; }
.start { width: 82px; background: #333; color: #fff; }
.c-scroll { width: 7px; background: #949494; }
.c-scroll i { height: 543px; background: #4a4a4a; border-radius: 3px 3px 4px 4px; }

.task { left: 0; top: 1040px; width: 1920px; height: 40px; background: #252423; flex-direction: row; color: #fff; }
.k { width: 40px; height: 40px; margin-right: 9px; display: flex; align-items: center; justify-content: center; border-bottom: 2px solid #b5b1ae; padding-top: 2px; }
.k.win-k { width: 48px; margin-right: 3px; border: 0; padding: 0; }
.k.hot { width: 48px; margin-right: 5px; background: #373635; }
.tray { margin-left: auto; display: flex; align-items: center; }
.net { margin-left: 10px; }
.snd { margin-left: 8px; }
.eng { margin-left: 11px; }
.clock { margin-left: 14px; display: flex; flex-direction: column; align-items: center; line-height: 18px; }
.note { margin: 0 20px 0 18px; }
.peek { width: 1px; height: 40px; background: #666; margin-right: 4px; }
</style>
